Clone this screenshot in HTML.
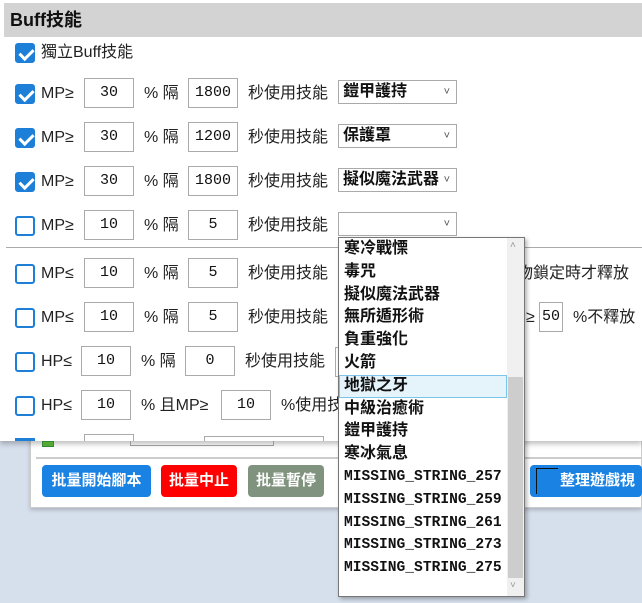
<!DOCTYPE html>
<html><head><meta charset="utf-8"><style>
*{margin:0;padding:0;box-sizing:border-box}
body{width:642px;height:603px;overflow:hidden;background:#d6dfec;font-family:"Liberation Sans","Noto Sans CJK TC",sans-serif;position:relative;color:#222}
.a{position:absolute}
.t{position:absolute;font-size:16px;line-height:20px;white-space:nowrap}
.cb{position:absolute;width:20px;height:20px;border:2px solid #1e7fd8;border-radius:3px;background:#fff}
.cb.on{background:#1e7fd8}
.cb.on::after{content:"";position:absolute;left:5px;top:1px;width:6px;height:11px;border:solid #fff;border-width:0 3px 3px 0;transform:rotate(45deg)}
.in{position:absolute;width:50px;height:30px;border:1px solid #aaa;background:#fff;font-family:"Liberation Mono",monospace;font-size:15px;line-height:28px;text-align:center;color:#111}
.sel{position:absolute;left:338px;width:119px;height:24px;border:1px solid #aaa;background:#fff;font-size:16px;font-weight:bold;line-height:22px;padding-left:4px;color:#111;white-space:nowrap}
.sel::after{content:"˅";position:absolute;right:6px;top:0;font-size:11px;font-weight:normal;color:#555}
.btn{position:absolute;top:465px;height:32px;border-radius:4px;color:#fff;font-weight:bold;font-size:15px;line-height:32px;text-align:center;white-space:nowrap}
.dd div{height:22.8px;line-height:22.8px;font-size:16px;font-weight:bold;padding-left:5px;color:#111;white-space:nowrap}
.dd .m{font-family:"Liberation Mono",monospace;font-size:14.6px}
</style></head><body>
<div class="a" style="left:30px;top:430px;width:612px;height:78px;background:#fff;border:1px solid #ccc;box-shadow:0 2px 4px rgba(0,0,0,.2)"></div>
<div class="a" style="left:36px;top:457px;width:606px;height:2px;background:#ccc"></div>
<div class="btn" style="left:42px;width:109px;background:#1a82e2">批量開始腳本</div>
<div class="btn" style="left:161px;width:76px;background:#f00">批量中止</div>
<div class="btn" style="left:248px;width:76px;background:#7f937f">批量暫停</div>
<div class="btn" style="left:530px;width:112px;background:#1a82e2;text-align:left;padding-left:30px">整理遊戲視</div>
<div class="a" style="left:536px;top:468px;width:22px;height:26px;border-left:1px solid #111;border-top:1px solid #111"></div>
<div class="a" style="left:0;top:0;width:642px;height:441px;background:#fff;box-shadow:0 3px 5px rgba(0,0,0,.25)"></div>
<div class="a" style="left:4px;top:3px;width:638px;height:34px;background:#d3d3d3"></div>
<div class="t" style="left:10px;top:9px;font-size:18px;line-height:22px;font-weight:bold;color:#111">Buff技能</div>
<div class="cb on" style="left:15px;top:43px"></div><div class="t" style="left:41px;top:43px">獨立Buff技能</div>

<div class="cb on" style="left:15px;top:84px"></div><div class="t" style="left:41px;top:84px">MP≥</div>
<div class="in" style="left:84px;top:78px">30</div><div class="t" style="left:144px;top:84px">% 隔</div>
<div class="in" style="left:188px;top:78px">1800</div><div class="t" style="left:248px;top:84px">秒使用技能</div>
<div class="sel" style="top:80px">鎧甲護持</div>

<div class="cb on" style="left:15px;top:128px"></div><div class="t" style="left:41px;top:128px">MP≥</div>
<div class="in" style="left:84px;top:122px">30</div><div class="t" style="left:144px;top:128px">% 隔</div>
<div class="in" style="left:188px;top:122px">1200</div><div class="t" style="left:248px;top:128px">秒使用技能</div>
<div class="sel" style="top:124px">保護罩</div>

<div class="cb on" style="left:15px;top:172px"></div><div class="t" style="left:41px;top:172px">MP≥</div>
<div class="in" style="left:84px;top:166px">30</div><div class="t" style="left:144px;top:172px">% 隔</div>
<div class="in" style="left:188px;top:166px">1800</div><div class="t" style="left:248px;top:172px">秒使用技能</div>
<div class="sel" style="top:168px">擬似魔法武器</div>

<div class="cb" style="left:15px;top:216px"></div><div class="t" style="left:41px;top:216px">MP≥</div>
<div class="in" style="left:84px;top:210px">10</div><div class="t" style="left:144px;top:216px">% 隔</div>
<div class="in" style="left:188px;top:210px">5</div><div class="t" style="left:248px;top:216px">秒使用技能</div>
<div class="sel" style="top:212px"></div>

<div class="a" style="left:6px;top:247px;width:636px;height:1px;background:#aaa"></div>

<div class="cb" style="left:15px;top:264px"></div><div class="t" style="left:41px;top:264px">MP≤</div>
<div class="in" style="left:84px;top:258px">10</div><div class="t" style="left:144px;top:264px">% 隔</div>
<div class="in" style="left:188px;top:258px">5</div><div class="t" style="left:248px;top:264px">秒使用技能</div>
<div class="t" style="left:517px;top:264px">物鎖定時才釋放</div>

<div class="cb" style="left:15px;top:308px"></div><div class="t" style="left:41px;top:308px">MP≤</div>
<div class="in" style="left:84px;top:302px">10</div><div class="t" style="left:144px;top:308px">% 隔</div>
<div class="in" style="left:188px;top:302px">5</div><div class="t" style="left:248px;top:308px">秒使用技能</div>
<div class="t" style="left:526px;top:308px">≥</div>
<div class="in" style="left:539px;top:302px;width:24px">50</div>
<div class="t" style="left:573px;top:308px">%不釋放</div>

<div class="cb" style="left:15px;top:352px"></div><div class="t" style="left:41px;top:352px">HP≤</div>
<div class="in" style="left:81px;top:346px">10</div><div class="t" style="left:141px;top:352px">% 隔</div>
<div class="in" style="left:185px;top:346px">0</div><div class="t" style="left:245px;top:352px">秒使用技能</div>
<div class="a" style="left:335px;top:347px;width:10px;height:30px;border:1px solid #aaa"></div>

<div class="cb" style="left:15px;top:396px"></div><div class="t" style="left:41px;top:396px">HP≤</div>
<div class="in" style="left:81px;top:390px">10</div><div class="t" style="left:141px;top:396px">% 且MP≥</div>
<div class="in" style="left:221px;top:390px">10</div><div class="t" style="left:281px;top:396px">%使用技</div>

<div class="a" style="left:15px;top:438px;width:20px;height:3px;background:#1e7fd8"></div>
<div class="a" style="left:84px;top:434px;width:50px;height:7px;border:1px solid #aaa;border-bottom:0"></div>
<div class="a" style="left:204px;top:436px;width:120px;height:5px;border:1px solid #aaa;border-bottom:0"></div>
<div class="a" style="left:42px;top:441px;width:12px;height:6px;background:#5a3;border:1px solid #383"></div>
<div class="a" style="left:130px;top:441px;width:144px;height:5px;border:1px solid #999;border-top:0"></div>

<div class="a dd" style="left:338px;top:237px;width:187px;height:360px;background:#fff;border:1px solid #777;box-shadow:2px 2px 4px rgba(0,0,0,.3)">
<div>寒冷戰慄</div><div>毒咒</div><div>擬似魔法武器</div><div>無所遁形術</div><div>負重強化</div><div>火箭</div>
<div style="background:#e5f3fb;outline:1px solid #7cc4ea;outline-offset:-1px;width:168px">地獄之牙</div>
<div>中級治癒術</div><div>鎧甲護持</div><div>寒冰氣息</div>
<div class="m">MISSING_STRING_257</div><div class="m">MISSING_STRING_259</div><div class="m">MISSING_STRING_261</div><div class="m">MISSING_STRING_273</div><div class="m">MISSING_STRING_275</div>
</div>
<div class="a" style="left:507px;top:238px;width:17px;height:358px;background:#f0f0f0"></div>
<div class="a" style="left:508px;top:377px;width:15px;height:201px;background:#cdcdcd"></div>
<div class="a" style="left:510px;top:240px;font-size:10px;color:#999">˄</div>
<div class="a" style="left:510px;top:580px;font-size:10px;color:#999">˅</div>
</body></html>
